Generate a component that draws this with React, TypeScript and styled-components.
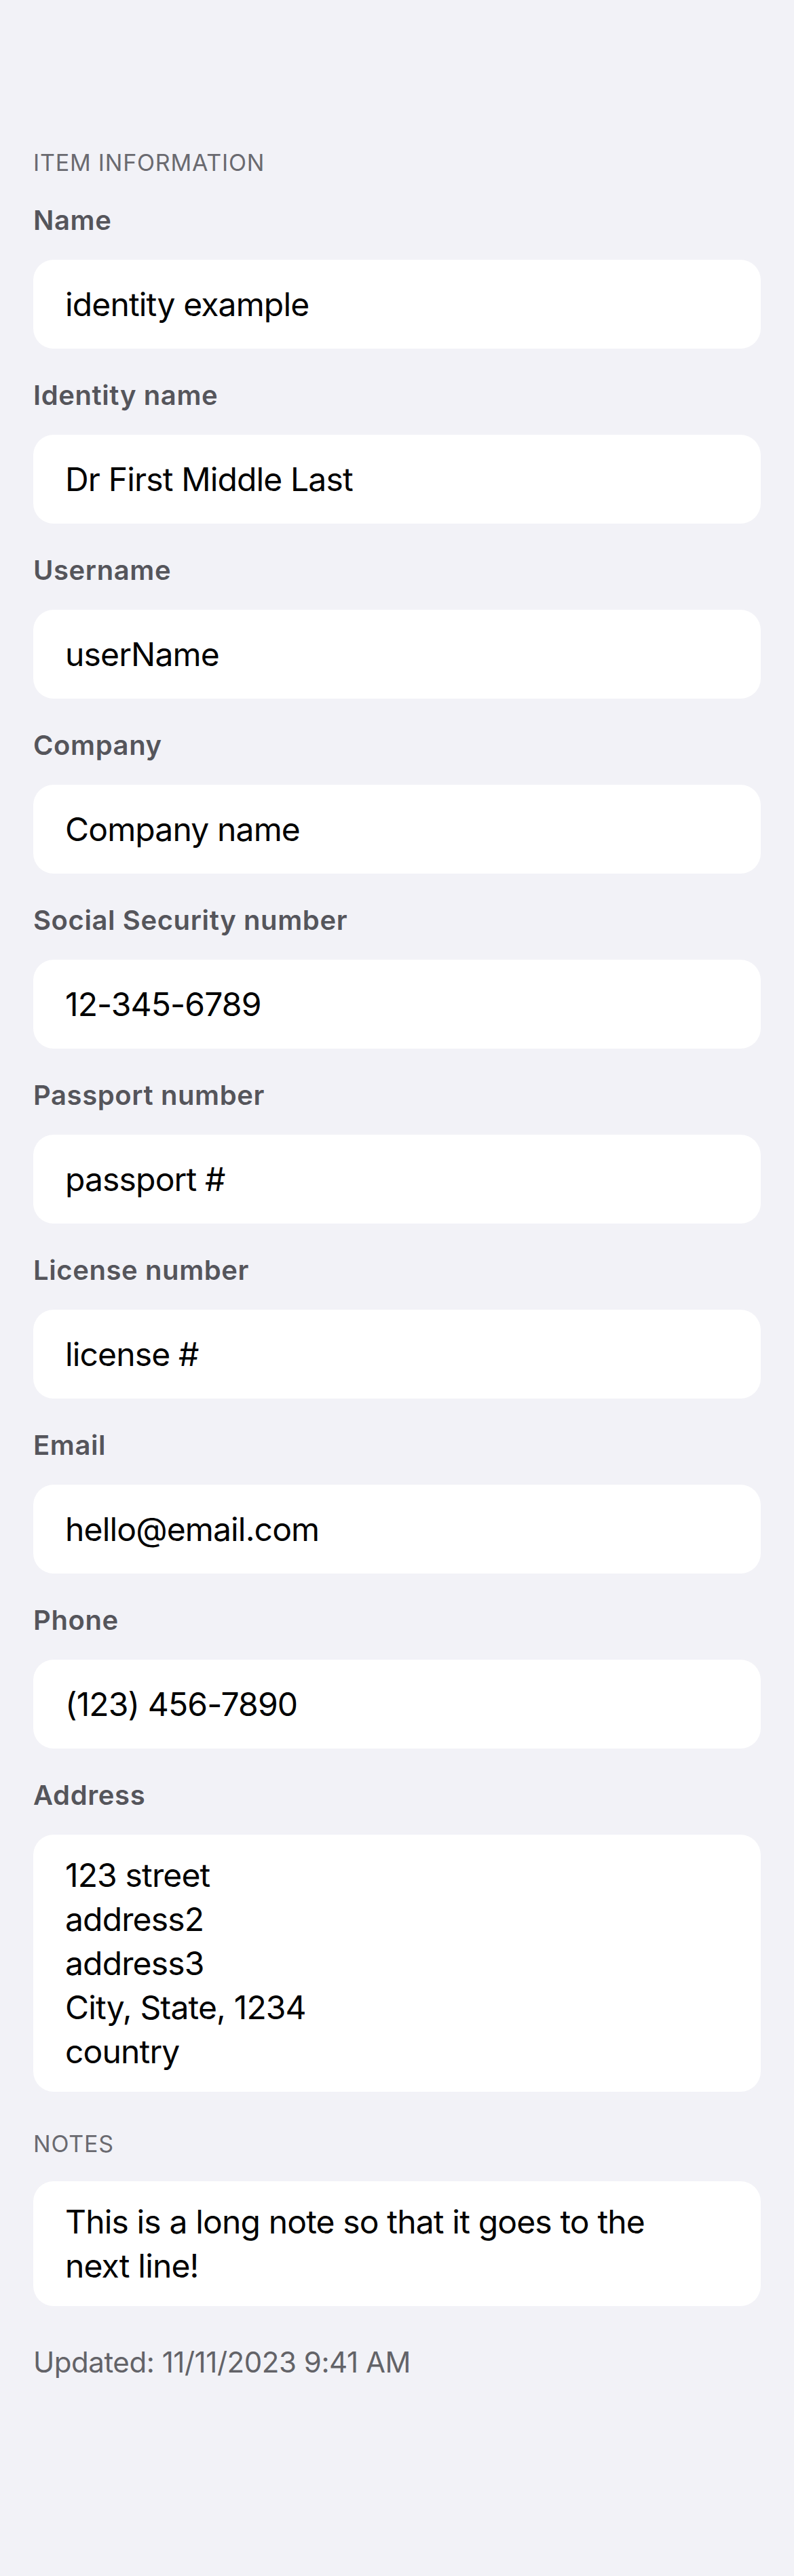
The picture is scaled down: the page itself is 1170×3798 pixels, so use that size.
import React from "react";
import styled, { createGlobalStyle } from "styled-components";

const GlobalStyle = createGlobalStyle`
  html, body {
    margin: 0;
    padding: 0;
    background: #f2f2f7;
  }
  body {
    font-family: Inter, "Noto Sans", "Liberation Sans", sans-serif;
    -webkit-font-smoothing: antialiased;
  }
`;

const Page = styled.main`
  min-height: 3798px;
  box-sizing: border-box;
  padding: 220px 49px 0;
  display: flex;
  flex-direction: column;
  background: #f2f2f7;
`;

const SectionHeader = styled.h2<{ $top?: number }>`
  margin: ${(p) => p.$top ?? 0}px 0 0;
  font-size: 34px;
  line-height: 40px;
  font-weight: 400;
  color: #6a6a70;
  text-transform: uppercase;
  letter-spacing: 0.8px;
`;

const FieldList = styled.div`
  display: flex;
  flex-direction: column;
  gap: 48px;
  margin-top: 44px;
`;

const Field = styled.section`
  display: flex;
  flex-direction: column;
  gap: 38px;
`;

const Label = styled.div`
  font-size: 40px;
  line-height: 41px;
  font-weight: 600;
  letter-spacing: 0.6px;
  color: #55555b;
`;

const Card = styled.div<{ $multiline?: boolean }>`
  background: #ffffff;
  border-radius: 30px;
  padding: ${(p) => (p.$multiline ? "27px" : "33px")} 47px;
  font-size: 48px;
  line-height: 65px;
  letter-spacing: -0.85px;
  color: #000000;
  white-space: pre-line;
`;

const NotesCard = styled(Card)`
  margin-top: 35px;
  padding-right: 110px;
`;

const Updated = styled.div`
  margin-top: 58px;
  font-size: 42px;
  line-height: 50px;
  letter-spacing: -0.45px;
  color: #636368;
`;

const fields: { label: string; value: string; multiline?: boolean }[] = [
  { label: "Name", value: "identity example" },
  { label: "Identity name", value: "Dr First Middle Last" },
  { label: "Username", value: "userName" },
  { label: "Company", value: "Company name" },
  { label: "Social Security number", value: "12-345-6789" },
  { label: "Passport number", value: "passport #" },
  { label: "License number", value: "license #" },
  { label: "Email", value: "hello@email.com" },
  { label: "Phone", value: "(123) 456-7890" },
  {
    label: "Address",
    value: "123 street\naddress2\naddress3\nCity, State, 1234\ncountry",
    multiline: true,
  },
];

export default function App() {
  return (
    <>
      <GlobalStyle />
      <Page>
        <SectionHeader>Item Information</SectionHeader>
        <FieldList>
          {fields.map((f) => (
            <Field key={f.label}>
              <Label>{f.label}</Label>
              <Card $multiline={f.multiline}>{f.value}</Card>
            </Field>
          ))}
        </FieldList>
        <SectionHeader $top={57}>Notes</SectionHeader>
        <NotesCard $multiline>
          This is a long note so that it goes to the next line!
        </NotesCard>
        <Updated>Updated: 11/11/2023 9:41 AM</Updated>
      </Page>
    </>
  );
}
